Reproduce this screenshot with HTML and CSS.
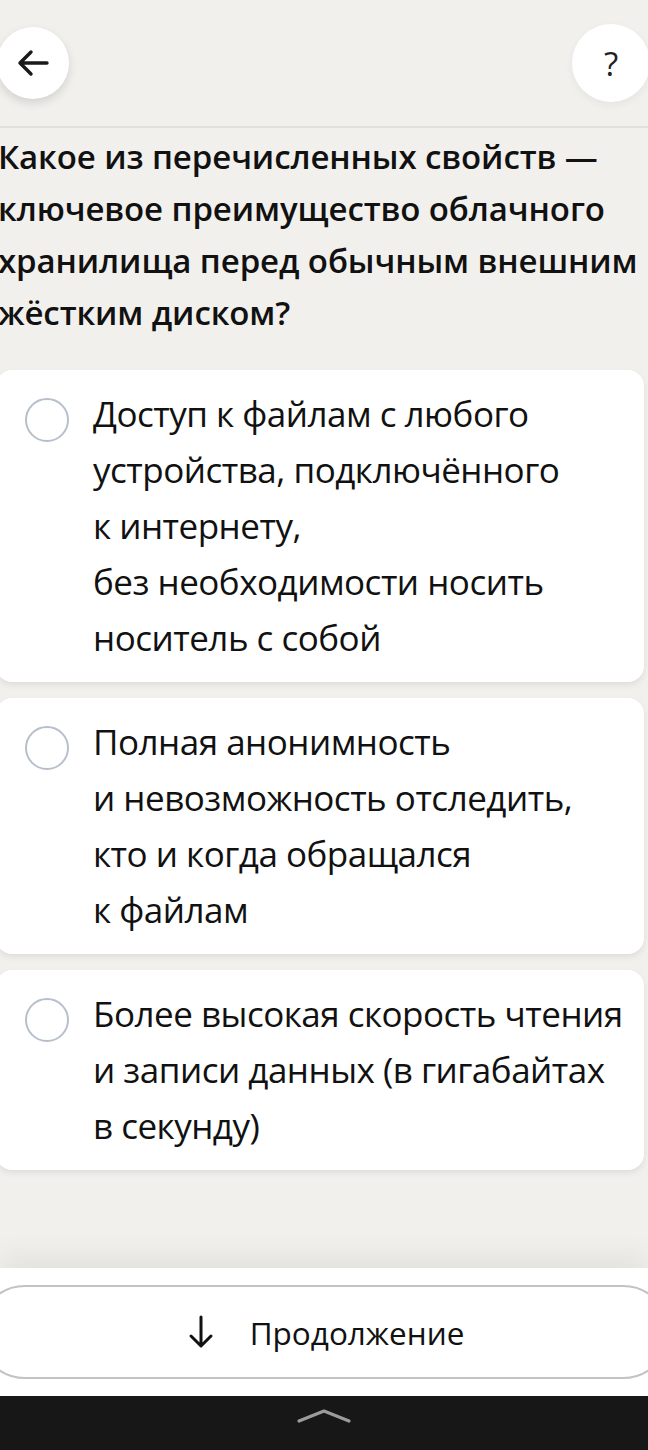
FILE: index.html
```html
<!DOCTYPE html>
<html lang="ru">
<head>
<meta charset="utf-8">
<title>Вопрос</title>
<link rel="stylesheet" href="styles.css">
</head>
<body>
<div class="page">
  <header class="topbar">
    <button class="round-btn back" aria-label="Назад">
      <svg width="34" height="34" viewBox="0 0 34 34"><path d="M31 17H4M15 6L4 17l11 11" fill="none" stroke="#1a1a1a" stroke-width="3.4" stroke-linecap="round" stroke-linejoin="round"/></svg>
    </button>
    <button class="round-btn help" aria-label="Помощь">?</button>
  </header>

  <h1 class="question">Какое из перечисленных свойств — ключевое преимущество облачного хранилища перед обычным внешним жёстким диском?</h1>

  <div class="options">
    <label class="option">
      <span class="radio"></span>
      <span class="opt-text">Доступ к файлам с любого<br>устройства, подключённого<br>к интернету,<br>без необходимости носить<br>носитель с собой</span>
    </label>
    <label class="option">
      <span class="radio"></span>
      <span class="opt-text">Полная анонимность<br>и невозможность отследить,<br>кто и когда обращался<br>к файлам</span>
    </label>
    <label class="option">
      <span class="radio"></span>
      <span class="opt-text">Более высокая скорость чтения<br>и записи данных (в гигабайтах<br>в секунду)</span>
    </label>
  </div>
</div>

<footer class="bottom">
  <div class="sheet">
    <button class="continue">
      <svg width="26" height="34" viewBox="0 0 26 34"><path d="M13 2v29M3 21l10 10 10-10" fill="none" stroke="#111" stroke-width="3" stroke-linecap="round" stroke-linejoin="round"/></svg>
      <span>Продолжение</span>
    </button>
  </div>
  <div class="navbar">
    <svg width="54" height="16" viewBox="0 0 54 16"><path d="M2 13L27 3l25 10" fill="none" stroke="#9b9b9b" stroke-width="3.2" stroke-linecap="round" stroke-linejoin="round"/></svg>
  </div>
</footer>
</body>
</html>
```

FILE: styles.css
```css
html, body {
  margin: 0;
  padding: 0;
}
body {
  background: #f1f0ed;
  font-family: "Open Sans", "Noto Sans", sans-serif;
  color: #111;
  width: 648px;
  height: 1450px;
  overflow: hidden;
}
.page {
  display: flex;
  flex-direction: column;
}
.topbar {
  height: 126px;
  border-bottom: 2px solid #e1e0dd;
  display: flex;
  justify-content: space-between;
  align-items: flex-start;
}
.round-btn {
  border: none;
  background: #fff;
  border-radius: 50%;
  padding: 0;
  display: flex;
  align-items: center;
  justify-content: center;
  font-family: "Open Sans", sans-serif;
}
.back {
  width: 72px;
  height: 72px;
  margin-top: 27px;
  margin-left: -3px;
  box-shadow: 0 4px 10px rgba(0,0,0,0.13);
}
.help {
  width: 78px;
  height: 78px;
  margin-top: 24px;
  margin-right: -2px;
  font-size: 33px;
  color: #222;
  box-shadow: 0 3px 8px rgba(0,0,0,0.05);
}
.question {
  margin: 3px 0 0 -2px;
  font-size: 33px;
  font-weight: 600;
  line-height: 52px;
  letter-spacing: -0.1px;
  color: #111;
  width: 650px;
}
.options {
  margin-top: 31px;
  display: flex;
  flex-direction: column;
  gap: 16px;
}
.option {
  display: flex;
  align-items: flex-start;
  background: #fff;
  border-radius: 16px;
  margin-left: -4px;
  width: 648px;
  padding: 16px 0;
  box-shadow: 0 3px 6px rgba(0,0,0,0.08);
}
.radio {
  flex: none;
  width: 44px;
  height: 44px;
  border: 2px solid #b7bfcc;
  border-radius: 50%;
  box-sizing: border-box;
  margin: 12px 0 0 29px;
}
.opt-text {
  margin-left: 24px;
  font-size: 35px;
  line-height: 56px;
  letter-spacing: -0.5px;
  color: #111;
}
.bottom {
  position: fixed;
  left: 0;
  right: 0;
  bottom: 0;
  display: flex;
  flex-direction: column;
}
.sheet {
  height: 128px;
  background: #fff;
  overflow: hidden;
  box-shadow: 0 -10px 30px rgba(0,0,0,0.07);
}
.continue {
  margin: 17px 0 0 -22px;
  width: 692px;
  height: 94px;
  border: 2px solid #c3c3c3;
  border-radius: 47px;
  background: #fff;
  display: flex;
  align-items: center;
  justify-content: center;
  gap: 36px;
  padding: 0 0 0 4px;
  font-family: "Open Sans", sans-serif;
  font-size: 31.5px;
  font-weight: 500;
  color: #111;
}
.navbar {
  height: 54px;
  background: #171717;
  display: flex;
  justify-content: center;
  align-items: center;
}
.navbar svg {
  margin-top: -14px;
}
```
